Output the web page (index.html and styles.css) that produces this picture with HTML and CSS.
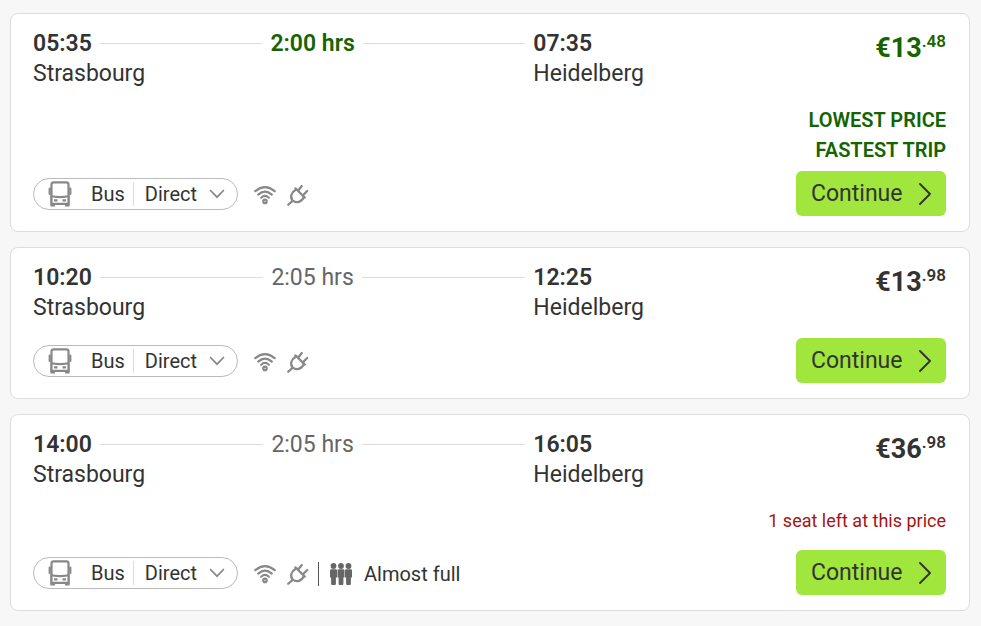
FILE: index.html
```html
<!DOCTYPE html>
<html lang="en">
<head>
<meta charset="utf-8">
<meta name="viewport" content="width=device-width, initial-scale=1">
<title>Strasbourg to Heidelberg</title>
<link rel="stylesheet" href="styles.css">
</head>
<body>
<svg class="sprite" aria-hidden="true">
  <symbol id="bus" viewBox="0 0 24 26">
    <path d="M3.500 23V3.500q0-2.200 2.200-2.200h12.600q2.200 0 2.200 2.200V23z" fill="none" stroke="currentColor" stroke-width="2.200"/>
    <path d="M2.400 14Q12 16.200 21.600 14V25.600H17V24H7v1.600H2.400z" fill="currentColor"/>
    <path d="M1.700 7.500v5.500M22.300 7.500v5.500" stroke="currentColor" stroke-width="2.200" stroke-linecap="round" fill="none"/>
    <path d="M4.600 16.400Q12 18 19.400 16.400V21.800H4.600z" fill="#fff"/>
    <path d="M6 19.400h3.500M14.500 19.400h3.500" stroke="currentColor" stroke-width="2.200"/>
  </symbol>
  <symbol id="wifi" viewBox="0 0 22 20">
    <g fill="none" stroke="currentColor" stroke-width="2.200" stroke-linecap="round">
      <path d="M1.300 6.200Q11-1.800 20.700 6.200M4.200 9.600Q11 3.600 17.800 9.600M7.200 12.700Q11 9.200 14.800 12.700"/>
      <circle cx="11" cy="16.400" r="1.700"/>
    </g>
  </symbol>
  <symbol id="plug" viewBox="0 0 22 22">
    <g fill="none" stroke="currentColor" stroke-width="2.200" stroke-linecap="round" stroke-linejoin="round">
      <path d="M1.200 20.800L5.600 16.900M8.400 4.300L17.800 13.600M11.800 5.800L14.800 2M16.600 10.600L20.200 7"/>
      <path d="M9.300 5.200C4 8.500 2.800 13 5.600 16.500C9.500 19.600 14.500 18.200 17 13"/>
    </g>
  </symbol>
  <symbol id="people" viewBox="0 0 22 22">
    <g fill="currentColor">
      <circle cx="3.500" cy="3" r="2.900"/><circle cx="11" cy="3" r="2.900"/><circle cx="18.500" cy="3" r="2.900"/>
      <path id="person" d="M1.200 6.200h4.600q1.200 0 1.200 1.300v7H5.900v6.300q0 1.200-1.200 1.200H2.300q-1.200 0-1.200-1.200v-6.300H0v-7q0-1.300 1.200-1.300z"/>
      <use href="#person" x="7.500"/><use href="#person" x="15"/>
    </g>
  </symbol>
  <symbol id="down" viewBox="0 0 16 10">
    <path d="M1.500 1.500L8 8.200L14.500 1.500" fill="none" stroke="currentColor" stroke-width="1.700" stroke-linecap="round"/>
  </symbol>
  <symbol id="right" viewBox="0 0 12 22">
    <path d="M1 1L11 11L1 21" fill="none" stroke="currentColor" stroke-width="1.900" stroke-linecap="round" stroke-linejoin="round"/>
  </symbol>
</svg>

<main class="trips">
  <article class="trip">
    <div class="route">
      <div class="leg">
        <div class="timeline"><time>05:35</time><i class="line"></i><span class="duration best">2:00 hrs</span><i class="line"></i></div>
        <div class="city">Strasbourg</div>
      </div>
      <div class="arrival">
        <time>07:35</time>
        <div class="city">Heidelberg</div>
      </div>
      <div class="price best">€13<sup>.48</sup></div>
    </div>
    <div class="notes badges"><div>LOWEST PRICE</div><div>FASTEST TRIP</div></div>
    <div class="actions">
      <button type="button" class="transfer"><svg class="bus"><use href="#bus"/></svg><span class="mode">Bus</span><span class="kind">Direct</span><svg class="down"><use href="#down"/></svg></button>
      <div class="extras">
        <svg class="wifi" role="img" aria-label="Wifi"><use href="#wifi"/></svg>
        <svg class="plug" role="img" aria-label="Power outlets"><use href="#plug"/></svg>
      </div>
      <button type="button" class="continue">Continue<svg class="right"><use href="#right"/></svg></button>
    </div>
  </article>

  <article class="trip">
    <div class="route">
      <div class="leg">
        <div class="timeline"><time>10:20</time><i class="line"></i><span class="duration">2:05 hrs</span><i class="line"></i></div>
        <div class="city">Strasbourg</div>
      </div>
      <div class="arrival">
        <time>12:25</time>
        <div class="city">Heidelberg</div>
      </div>
      <div class="price">€13<sup>.98</sup></div>
    </div>
    <div class="actions">
      <button type="button" class="transfer"><svg class="bus"><use href="#bus"/></svg><span class="mode">Bus</span><span class="kind">Direct</span><svg class="down"><use href="#down"/></svg></button>
      <div class="extras">
        <svg class="wifi" role="img" aria-label="Wifi"><use href="#wifi"/></svg>
        <svg class="plug" role="img" aria-label="Power outlets"><use href="#plug"/></svg>
      </div>
      <button type="button" class="continue">Continue<svg class="right"><use href="#right"/></svg></button>
    </div>
  </article>

  <article class="trip">
    <div class="route">
      <div class="leg">
        <div class="timeline"><time>14:00</time><i class="line"></i><span class="duration">2:05 hrs</span><i class="line"></i></div>
        <div class="city">Strasbourg</div>
      </div>
      <div class="arrival">
        <time>16:05</time>
        <div class="city">Heidelberg</div>
      </div>
      <div class="price">€36<sup>.98</sup></div>
    </div>
    <div class="notes seats">1 seat left at this price</div>
    <div class="actions">
      <button type="button" class="transfer"><svg class="bus"><use href="#bus"/></svg><span class="mode">Bus</span><span class="kind">Direct</span><svg class="down"><use href="#down"/></svg></button>
      <div class="extras">
        <svg class="wifi" role="img" aria-label="Wifi"><use href="#wifi"/></svg>
        <svg class="plug" role="img" aria-label="Power outlets"><use href="#plug"/></svg>
        <div class="load"><svg class="people" aria-hidden="true"><use href="#people"/></svg><span>Almost full</span></div>
      </div>
      <button type="button" class="continue">Continue<svg class="right"><use href="#right"/></svg></button>
    </div>
  </article>
</main>
</body>
</html>
```

FILE: styles.css
```css
* {
  box-sizing: border-box;
}

body {
  margin: 0;
  background: #f7f7f7;
  color: #333;
  font: 23px/30px Roboto, "Liberation Sans", sans-serif;
}

.sprite {
  display: block;
  width: 0;
  height: 0;
}

svg {
  flex: none;
}

.trips {
  display: flex;
  flex-direction: column;
  gap: 15px;
  padding: 13px 11px 15px 10px;
}

.trip {
  padding: 15px 23px 15px 22px;
  background: #fff;
  border: 1px solid #ddd;
  border-radius: 8px;
}

.route {
  display: grid;
  grid-template-columns: 548fr 252fr 200fr;
}

.timeline {
  display: flex;
  align-items: center;
  gap: 8px;
  padding-right: 8px;
}

.line {
  flex: 1;
  height: 1px;
  margin-bottom: 2px;
  background: #ddd;
}

time,
.best {
  font-weight: 600;
}

.duration {
  color: #666;
}

.best,
.badges {
  color: #146400;
}

.price {
  padding-top: 4px;
  font-size: 27px;
  font-weight: 700;
  text-align: right;
}

.price sup {
  font-size: 17px;
  font-weight: 600;
  line-height: 1px;
  vertical-align: 10px;
}

.notes {
  margin-top: 16px;
  text-align: right;
}

.badges {
  margin-bottom: -9px;
  font-size: 20px;
  font-weight: 600;
}

.seats {
  margin-bottom: -1px;
  color: #a51414;
  font-size: 18px;
}

.actions {
  display: flex;
  align-items: center;
  margin-top: 15px;
}

button {
  display: flex;
  align-items: center;
  color: inherit;
  font: inherit;
  cursor: pointer;
}

.transfer {
  height: 32px;
  padding: 0 12px 0 14px;
  background: #fff;
  border: 1px solid #bbb;
  border-radius: 16px;
  font-size: 20px;
}

.bus {
  width: 24px;
  height: 26px;
  color: #888;
}

.mode {
  margin-left: 19px;
  padding-right: 8px;
}

.kind {
  padding: 0 12px 0 11px;
  border-left: 1px solid #ddd;
  line-height: 24px;
}

.down {
  width: 16px;
  height: 10px;
  color: #888;
}

.extras {
  display: flex;
  align-items: center;
  padding-top: 2px;
}

.wifi {
  width: 22px;
  height: 20px;
  margin-left: 16px;
  color: #888;
}

.plug {
  width: 22px;
  height: 22px;
  margin-left: 11px;
  color: #888;
}

.load {
  display: flex;
  align-items: center;
  gap: 12px;
  margin-left: 9px;
  padding-left: 11px;
  border-left: 1px solid #555;
  font-size: 20px;
  line-height: 24px;
}

.people {
  width: 22px;
  height: 22px;
  color: #666;
}

.continue {
  justify-content: space-between;
  width: 150px;
  height: 45px;
  margin-left: auto;
  padding: 0 15px;
  background: #a0e63c;
  border: 0;
  border-radius: 6px;
}

.right {
  width: 12px;
  height: 22px;
}
```
